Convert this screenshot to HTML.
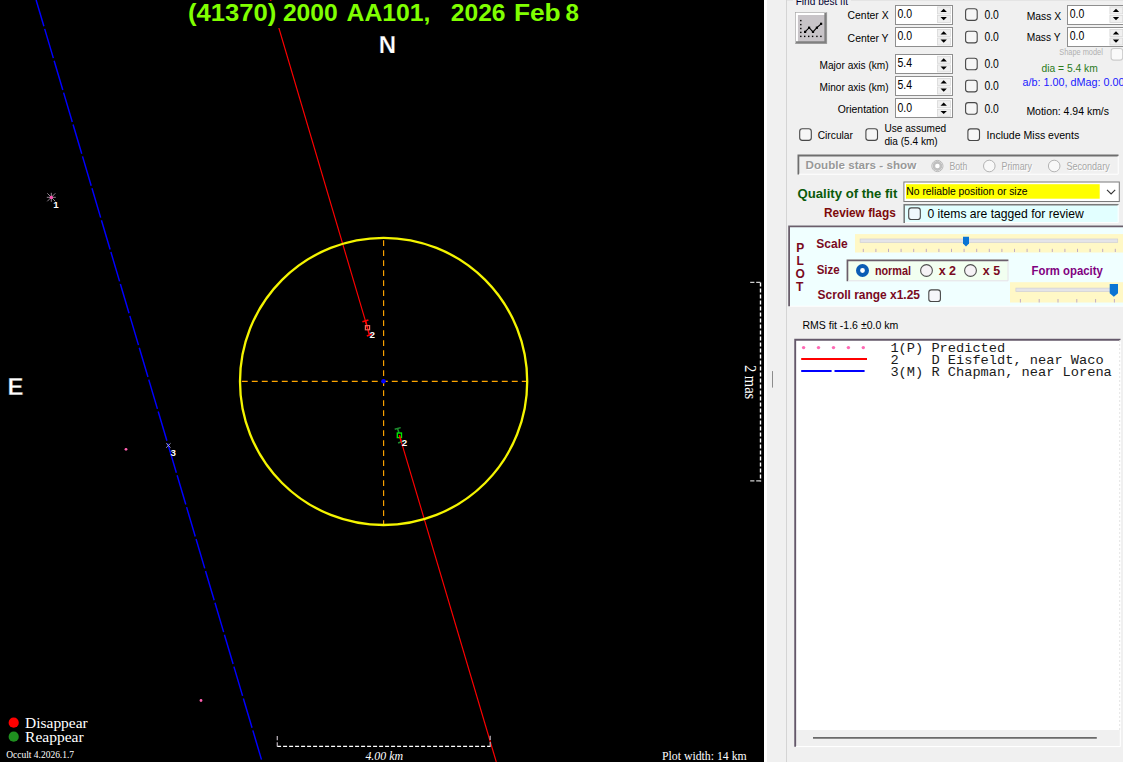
<!DOCTYPE html>
<html><head><meta charset="utf-8"><style>html,body{margin:0;padding:0;background:#f0f0f0;}body{width:1123px;height:762px;overflow:hidden;font-family:"Liberation Sans",sans-serif;}svg{display:block;}text{white-space:pre;}</style></head><body>
<svg width="1123" height="762" viewBox="0 0 1123 762">
<rect x="0" y="0" width="1123" height="762" fill="#f0f0f0"/>
<rect x="0" y="0" width="764" height="762" fill="#000"/>
<g id="plot">
<line x1="36.1" y1="0" x2="262.2" y2="762" stroke="#0000ff" stroke-width="1.45" stroke-dasharray="30.56 2.7" stroke-dashoffset="3.15"/>
<line x1="270.6" y1="0" x2="367.5" y2="327.8" stroke="#ff0000" stroke-width="1.15"/>
<line x1="399.4" y1="435.3" x2="496.3" y2="762" stroke="#ff0000" stroke-width="1.15"/>
<line x1="241.8" y1="381.3" x2="528" y2="381.3" stroke="#ffa500" stroke-width="1.15" stroke-dasharray="5.9 4.1"/>
<line x1="383.6" y1="240.2" x2="383.6" y2="526" stroke="#ffa500" stroke-width="1.15" stroke-dasharray="5.9 4.1"/>
<circle cx="383.6" cy="381.4" r="143.6" fill="none" stroke="#f4f400" stroke-width="2.3"/>
<circle cx="383.5" cy="381.3" r="2.3" fill="#0000ff"/>
<g stroke="#ff0000" stroke-width="1.5" fill="none"><line x1="362.4" y1="321.8" x2="368.4" y2="320"/><line x1="366.8" y1="336" x2="372.3" y2="334.1"/><line x1="365.5" y1="320.7" x2="369.4" y2="334.9"/></g>
<rect x="365.4" y="325.6" width="4.2" height="4.2" fill="none" stroke="#e8685c" stroke-width="1.2"/>
<g stroke="#1f8f2f" stroke-width="1.5" fill="none"><line x1="394.7" y1="429.2" x2="400.7" y2="427.6"/><line x1="398.1" y1="443" x2="403.6" y2="441"/><line x1="397.5" y1="428.3" x2="399" y2="433"/></g>
<rect x="397.3" y="433" width="4.2" height="4.6" fill="none" stroke="#00ee00" stroke-width="1.3"/>
<line x1="399.4" y1="435.3" x2="401.5" y2="442.5" stroke="#ff0000" stroke-width="1.4"/>
<g stroke="#a9a9d0" stroke-width="0.9"><line x1="166.2" y1="443.3" x2="170.6" y2="447.7"/><line x1="170.6" y1="443.3" x2="166.2" y2="447.7"/></g>
<g stroke="#b8a8b8" stroke-width="0.8"><line x1="46.8" y1="197.3" x2="55.8" y2="197.3"/><line x1="51.3" y1="192.8" x2="51.3" y2="201.8"/><line x1="47.3" y1="193.3" x2="55.3" y2="201.3"/><line x1="55.3" y1="193.3" x2="47.3" y2="201.3"/></g>
<circle cx="51.3" cy="197.4" r="1.7" fill="#ff50b0"/><circle cx="126" cy="449.3" r="1.4" fill="#ff60b0"/><circle cx="201" cy="700.5" r="1.4" fill="#ff60b0"/>
<circle cx="13.7" cy="722.7" r="5.1" fill="#ff0000"/><circle cx="13.7" cy="736.7" r="5.1" fill="#1f8f1f"/>
<g stroke="#fff" stroke-width="1.4" fill="none" stroke-dasharray="4 2"><line x1="277.1" y1="746.4" x2="490.6" y2="746.4"/><line x1="760.5" y1="282.4" x2="760.5" y2="481.4"/></g>
<g stroke="#b0a8b0" stroke-width="1.3" fill="none" stroke-dasharray="4.2 2"><line x1="277.3" y1="736" x2="277.3" y2="746.4"/><line x1="490.2" y1="735.7" x2="490.2" y2="746.4"/></g>
<g stroke="#d0d0d0" stroke-width="1.2" fill="none" stroke-dasharray="4.2 1.8"><line x1="750.2" y1="282.4" x2="760.5" y2="282.4"/><line x1="750.2" y1="480.8" x2="760.5" y2="480.8"/></g>
<rect x="186" y="1" width="396" height="27" fill="#000"/>
<text x="187.9" y="21.2" font-family="Liberation Sans" font-size="24" font-weight="bold" font-style="normal" fill="#80ff00" textLength="88.4" lengthAdjust="spacingAndGlyphs" >(41370)</text>
<text x="282.9" y="21.2" font-family="Liberation Sans" font-size="24" font-weight="bold" font-style="normal" fill="#80ff00" textLength="54.9" lengthAdjust="spacingAndGlyphs" >2000</text>
<text x="346.5" y="21.2" font-family="Liberation Sans" font-size="24" font-weight="bold" font-style="normal" fill="#80ff00" textLength="84.0" lengthAdjust="spacingAndGlyphs" >AA101,</text>
<text x="450.8" y="21.2" font-family="Liberation Sans" font-size="24" font-weight="bold" font-style="normal" fill="#80ff00" textLength="54.7" lengthAdjust="spacingAndGlyphs" >2026</text>
<text x="513.9" y="21.2" font-family="Liberation Sans" font-size="24" font-weight="bold" font-style="normal" fill="#80ff00" textLength="46.8" lengthAdjust="spacingAndGlyphs" >Feb</text>
<text x="565.4" y="21.2" font-family="Liberation Sans" font-size="24" font-weight="bold" font-style="normal" fill="#80ff00" textLength="13.4" lengthAdjust="spacingAndGlyphs" >8</text>
<text x="378.7" y="52.9" font-family="Liberation Sans" font-size="24" font-weight="bold" font-style="normal" fill="#fff" stroke="#000" stroke-width="0.25">N</text>
<text x="7.5" y="395.0" font-family="Liberation Sans" font-size="24" font-weight="bold" font-style="normal" fill="#fff" stroke="#000" stroke-width="0.3">E</text>
<text x="53.2" y="207.8" font-family="Liberation Sans" font-size="9.8" font-weight="bold" font-style="normal" fill="#fff" >1</text>
<text x="369.5" y="337.9" font-family="Liberation Sans" font-size="9.8" font-weight="bold" font-style="normal" fill="#fff" >2</text>
<text x="401.8" y="446.1" font-family="Liberation Sans" font-size="9.8" font-weight="bold" font-style="normal" fill="#fff" >2</text>
<text x="170.5" y="456.1" font-family="Liberation Sans" font-size="9.8" font-weight="bold" font-style="normal" fill="#fff" >3</text>
<text x="25.1" y="727.5" font-family="Liberation Serif" font-size="14.2" font-weight="normal" font-style="normal" fill="#fff" textLength="62.6" lengthAdjust="spacingAndGlyphs" >Disappear</text>
<text x="25.1" y="741.6" font-family="Liberation Serif" font-size="14.2" font-weight="normal" font-style="normal" fill="#fff" textLength="58.6" lengthAdjust="spacingAndGlyphs" >Reappear</text>
<text x="6.2" y="757.6" font-family="Liberation Serif" font-size="10" font-weight="normal" font-style="normal" fill="#fff" textLength="67.9" lengthAdjust="spacingAndGlyphs" >Occult 4.2026.1.7</text>
<text x="365.4" y="759.6" font-family="Liberation Serif" font-size="12.5" font-weight="normal" font-style="italic" fill="#fff" textLength="37.6" lengthAdjust="spacingAndGlyphs" >4.00 km</text>
<text x="662.0" y="759.6" font-family="Liberation Serif" font-size="12.7" font-weight="normal" font-style="normal" fill="#fff" textLength="84.7" lengthAdjust="spacingAndGlyphs" >Plot width: 14 km</text>
<g transform="translate(744.6,365) rotate(90)">
<text x="0.0" y="0.0" font-family="Liberation Serif" font-size="16" font-weight="normal" font-style="normal" fill="#fff" textLength="34.2" lengthAdjust="spacingAndGlyphs" >2 mas</text>
</g>
</g>
<g id="panel">
<rect x="764" y="0" width="3" height="762" fill="#fff"/>
<line x1="786.5" y1="0" x2="786.5" y2="762" stroke="#d4d4d4" stroke-width="1"/>
<line x1="772.5" y1="371.1" x2="772.5" y2="387.6" stroke="#8c8c8c" stroke-width="1"/>
<line x1="787" y1="0.5" x2="1123" y2="0.5" stroke="#e4e4e4" stroke-width="1"/>
<rect x="793" y="0" width="58" height="6" fill="#f0f0f0"/>
<text x="795.7" y="4.6" font-family="Liberation Sans" font-size="11.5" font-weight="normal" font-style="normal" fill="#000030" textLength="52.3" lengthAdjust="spacingAndGlyphs" >Find best fit</text>
<rect x="795.3" y="12.3" width="31.5" height="31.4" fill="#c8c4c8"/>
<path d="M796.6 43.7V13.6H826.8" fill="none" stroke="#fff" stroke-width="2.6"/>
<path d="M825.6 13V42.4H796" fill="none" stroke="#808080" stroke-width="2.5"/>
<rect x="795.3" y="12.3" width="31.5" height="31.4" fill="none" stroke="#a0a0a0" stroke-width="0.6"/>
<rect x="800.1" y="19.9" width="1.4" height="1.4" fill="#000"/>
<rect x="800.1" y="23.9" width="1.4" height="1.4" fill="#000"/>
<rect x="800.1" y="27.8" width="1.4" height="1.4" fill="#000"/>
<rect x="800.1" y="31.7" width="1.4" height="1.4" fill="#000"/>
<rect x="800.1" y="35.7" width="1.4" height="1.4" fill="#000"/>
<rect x="804.0" y="35.7" width="1.4" height="1.4" fill="#000"/>
<rect x="808.0" y="35.7" width="1.4" height="1.4" fill="#000"/>
<rect x="811.9" y="35.7" width="1.4" height="1.4" fill="#000"/>
<rect x="816.2" y="35.7" width="1.4" height="1.4" fill="#000"/>
<rect x="820.2" y="35.7" width="1.4" height="1.4" fill="#000"/>
<polyline points="805.1,31.9 809.1,27.7 813,31.9 816.9,27.7 821.1,23.8" fill="none" stroke="#000" stroke-width="1.1"/>
<rect x="804.0" y="30.8" width="2.2" height="2.2" fill="#000"/>
<rect x="808.0" y="26.6" width="2.2" height="2.2" fill="#000"/>
<rect x="811.9" y="30.8" width="2.2" height="2.2" fill="#000"/>
<rect x="815.8" y="26.6" width="2.2" height="2.2" fill="#000"/>
<rect x="820.0" y="22.7" width="2.2" height="2.2" fill="#000"/>
<text x="847.6" y="19.3" font-family="Liberation Sans" font-size="11.7" font-weight="normal" font-style="normal" fill="#000" textLength="41.0" lengthAdjust="spacingAndGlyphs" >Center X</text>
<rect x="895.5" y="5.5" width="57.0" height="19" fill="#fff" stroke="#8e8e8e" stroke-width="1"/>
<text x="897.4" y="17.7" font-family="Liberation Sans" font-size="12.3" font-weight="normal" font-style="normal" fill="#000" textLength="14.6" lengthAdjust="spacingAndGlyphs" >0.0</text>
<rect x="937.6" y="6.9" width="12.8" height="7" fill="#f0f0f0" stroke="#d8d8d8" stroke-width="0.8"/>
<rect x="937.6" y="15.5" width="12.8" height="7" fill="#f0f0f0" stroke="#d8d8d8" stroke-width="0.8"/>
<path d="M940.5 12.0L943.7 8.8L946.9 12.0Z" fill="#000"/>
<path d="M940.5 17.1L943.7 20.3L946.9 17.1Z" fill="#000"/>
<rect x="965.6" y="8.8" width="11.6" height="11.6" rx="2.6" fill="#f6f6f6" stroke="#484848" stroke-width="1.1"/>
<text x="984.4" y="18.9" font-family="Liberation Sans" font-size="12" font-weight="normal" font-style="normal" fill="#000" textLength="14.4" lengthAdjust="spacingAndGlyphs" >0.0</text>
<text x="847.6" y="41.8" font-family="Liberation Sans" font-size="11.7" font-weight="normal" font-style="normal" fill="#000" textLength="41.0" lengthAdjust="spacingAndGlyphs" >Center Y</text>
<rect x="895.5" y="27.5" width="57.0" height="19" fill="#fff" stroke="#8e8e8e" stroke-width="1"/>
<text x="897.4" y="40.2" font-family="Liberation Sans" font-size="12.3" font-weight="normal" font-style="normal" fill="#000" textLength="14.6" lengthAdjust="spacingAndGlyphs" >0.0</text>
<rect x="937.6" y="29.4" width="12.8" height="7" fill="#f0f0f0" stroke="#d8d8d8" stroke-width="0.8"/>
<rect x="937.6" y="38.0" width="12.8" height="7" fill="#f0f0f0" stroke="#d8d8d8" stroke-width="0.8"/>
<path d="M940.5 34.5L943.7 31.3L946.9 34.5Z" fill="#000"/>
<path d="M940.5 39.6L943.7 42.8L946.9 39.6Z" fill="#000"/>
<rect x="965.6" y="31.3" width="11.6" height="11.6" rx="2.6" fill="#f6f6f6" stroke="#484848" stroke-width="1.1"/>
<text x="984.4" y="41.4" font-family="Liberation Sans" font-size="12" font-weight="normal" font-style="normal" fill="#000" textLength="14.4" lengthAdjust="spacingAndGlyphs" >0.0</text>
<text x="819.6" y="68.7" font-family="Liberation Sans" font-size="11.7" font-weight="normal" font-style="normal" fill="#000" textLength="69.0" lengthAdjust="spacingAndGlyphs" >Major axis (km)</text>
<rect x="895.5" y="54.5" width="57.0" height="19" fill="#fff" stroke="#8e8e8e" stroke-width="1"/>
<text x="897.4" y="67.1" font-family="Liberation Sans" font-size="12.3" font-weight="normal" font-style="normal" fill="#000" textLength="14.6" lengthAdjust="spacingAndGlyphs" >5.4</text>
<rect x="937.6" y="56.3" width="12.8" height="7" fill="#f0f0f0" stroke="#d8d8d8" stroke-width="0.8"/>
<rect x="937.6" y="64.9" width="12.8" height="7" fill="#f0f0f0" stroke="#d8d8d8" stroke-width="0.8"/>
<path d="M940.5 61.4L943.7 58.2L946.9 61.4Z" fill="#000"/>
<path d="M940.5 66.5L943.7 69.7L946.9 66.5Z" fill="#000"/>
<rect x="965.6" y="58.2" width="11.6" height="11.6" rx="2.6" fill="#f6f6f6" stroke="#484848" stroke-width="1.1"/>
<text x="984.4" y="68.3" font-family="Liberation Sans" font-size="12" font-weight="normal" font-style="normal" fill="#000" textLength="14.4" lengthAdjust="spacingAndGlyphs" >0.0</text>
<text x="819.6" y="90.8" font-family="Liberation Sans" font-size="11.7" font-weight="normal" font-style="normal" fill="#000" textLength="69.0" lengthAdjust="spacingAndGlyphs" >Minor axis (km)</text>
<rect x="895.5" y="76.5" width="57.0" height="19" fill="#fff" stroke="#8e8e8e" stroke-width="1"/>
<text x="897.4" y="89.2" font-family="Liberation Sans" font-size="12.3" font-weight="normal" font-style="normal" fill="#000" textLength="14.6" lengthAdjust="spacingAndGlyphs" >5.4</text>
<rect x="937.6" y="78.4" width="12.8" height="7" fill="#f0f0f0" stroke="#d8d8d8" stroke-width="0.8"/>
<rect x="937.6" y="87.0" width="12.8" height="7" fill="#f0f0f0" stroke="#d8d8d8" stroke-width="0.8"/>
<path d="M940.5 83.5L943.7 80.3L946.9 83.5Z" fill="#000"/>
<path d="M940.5 88.6L943.7 91.8L946.9 88.6Z" fill="#000"/>
<rect x="965.6" y="80.3" width="11.6" height="11.6" rx="2.6" fill="#f6f6f6" stroke="#484848" stroke-width="1.1"/>
<text x="984.4" y="90.4" font-family="Liberation Sans" font-size="12" font-weight="normal" font-style="normal" fill="#000" textLength="14.4" lengthAdjust="spacingAndGlyphs" >0.0</text>
<text x="837.7" y="113.1" font-family="Liberation Sans" font-size="11.7" font-weight="normal" font-style="normal" fill="#000" textLength="50.9" lengthAdjust="spacingAndGlyphs" >Orientation</text>
<rect x="895.5" y="98.5" width="57.0" height="19" fill="#fff" stroke="#8e8e8e" stroke-width="1"/>
<text x="897.4" y="111.5" font-family="Liberation Sans" font-size="12.3" font-weight="normal" font-style="normal" fill="#000" textLength="14.6" lengthAdjust="spacingAndGlyphs" >0.0</text>
<rect x="937.6" y="100.7" width="12.8" height="7" fill="#f0f0f0" stroke="#d8d8d8" stroke-width="0.8"/>
<rect x="937.6" y="109.3" width="12.8" height="7" fill="#f0f0f0" stroke="#d8d8d8" stroke-width="0.8"/>
<path d="M940.5 105.8L943.7 102.6L946.9 105.8Z" fill="#000"/>
<path d="M940.5 110.9L943.7 114.1L946.9 110.9Z" fill="#000"/>
<rect x="965.6" y="102.6" width="11.6" height="11.6" rx="2.6" fill="#f6f6f6" stroke="#484848" stroke-width="1.1"/>
<text x="984.4" y="112.7" font-family="Liberation Sans" font-size="12" font-weight="normal" font-style="normal" fill="#000" textLength="14.4" lengthAdjust="spacingAndGlyphs" >0.0</text>
<text x="1026.7" y="19.8" font-family="Liberation Sans" font-size="11.5" font-weight="normal" font-style="normal" fill="#000" textLength="34.5" lengthAdjust="spacingAndGlyphs" >Mass X</text>
<text x="1026.7" y="41.2" font-family="Liberation Sans" font-size="11.5" font-weight="normal" font-style="normal" fill="#000" textLength="33.8" lengthAdjust="spacingAndGlyphs" >Mass Y</text>
<rect x="1067.5" y="5.5" width="57.0" height="19" fill="#fff" stroke="#8e8e8e" stroke-width="1"/>
<text x="1069.7" y="17.7" font-family="Liberation Sans" font-size="12.3" font-weight="normal" font-style="normal" fill="#000" textLength="14.6" lengthAdjust="spacingAndGlyphs" >0.0</text>
<rect x="1109.9" y="6.9" width="12.8" height="7" fill="#f0f0f0" stroke="#d8d8d8" stroke-width="0.8"/>
<rect x="1109.9" y="15.5" width="12.8" height="7" fill="#f0f0f0" stroke="#d8d8d8" stroke-width="0.8"/>
<path d="M1112.8 12.0L1116.0 8.8L1119.2 12.0Z" fill="#000"/>
<path d="M1112.8 17.1L1116.0 20.3L1119.2 17.1Z" fill="#000"/>
<rect x="1067.5" y="27.5" width="57.0" height="19" fill="#fff" stroke="#8e8e8e" stroke-width="1"/>
<text x="1069.7" y="40.2" font-family="Liberation Sans" font-size="12.3" font-weight="normal" font-style="normal" fill="#000" textLength="14.6" lengthAdjust="spacingAndGlyphs" >0.0</text>
<rect x="1109.9" y="29.4" width="12.8" height="7" fill="#f0f0f0" stroke="#d8d8d8" stroke-width="0.8"/>
<rect x="1109.9" y="38.0" width="12.8" height="7" fill="#f0f0f0" stroke="#d8d8d8" stroke-width="0.8"/>
<path d="M1112.8 34.5L1116.0 31.3L1119.2 34.5Z" fill="#000"/>
<path d="M1112.8 39.6L1116.0 42.8L1119.2 39.6Z" fill="#000"/>
<text x="1059.3" y="54.5" font-family="Liberation Sans" font-size="9" font-weight="normal" font-style="normal" fill="#b0b0b0" textLength="43.5" lengthAdjust="spacingAndGlyphs" >Shape model</text>
<rect x="1111.1" y="48.5" width="11.6" height="11.6" rx="2.6" fill="#fafafa" stroke="#cccccc" stroke-width="1.1"/>
<text x="1041.5" y="71.5" font-family="Liberation Sans" font-size="10.5" font-weight="normal" font-style="normal" fill="#2a7a1a" textLength="56.3" lengthAdjust="spacingAndGlyphs" >dia = 5.4 km</text>
<text x="1022.5" y="85.6" font-family="Liberation Sans" font-size="10.5" font-weight="normal" font-style="normal" fill="#1a1aff" textLength="102.0" lengthAdjust="spacingAndGlyphs" >a/b: 1.00, dMag: 0.00</text>
<text x="1026.4" y="115.4" font-family="Liberation Sans" font-size="10.6" font-weight="normal" font-style="normal" fill="#000" textLength="82.6" lengthAdjust="spacingAndGlyphs" >Motion: 4.94 km/s</text>
<rect x="799.7" y="128.8" width="11.6" height="11.6" rx="2.6" fill="#f6f6f6" stroke="#484848" stroke-width="1.1"/>
<text x="817.7" y="139.2" font-family="Liberation Sans" font-size="11.5" font-weight="normal" font-style="normal" fill="#000" textLength="35.3" lengthAdjust="spacingAndGlyphs" >Circular</text>
<rect x="865.9" y="128.8" width="11.6" height="11.6" rx="2.6" fill="#f6f6f6" stroke="#484848" stroke-width="1.1"/>
<text x="884.5" y="132.3" font-family="Liberation Sans" font-size="10.8" font-weight="normal" font-style="normal" fill="#000" textLength="61.7" lengthAdjust="spacingAndGlyphs" >Use assumed</text>
<text x="884.5" y="145.2" font-family="Liberation Sans" font-size="10.8" font-weight="normal" font-style="normal" fill="#000" textLength="53.2" lengthAdjust="spacingAndGlyphs" >dia (5.4 km)</text>
<rect x="967.9" y="128.9" width="11.6" height="11.6" rx="2.6" fill="#f6f6f6" stroke="#484848" stroke-width="1.1"/>
<text x="986.6" y="139.2" font-family="Liberation Sans" font-size="11.5" font-weight="normal" font-style="normal" fill="#000" textLength="92.6" lengthAdjust="spacingAndGlyphs" >Include Miss events</text>
<path d="M798.4 174.5V155.5H1118.5" fill="none" stroke="#6e6e6e" stroke-width="1.8"/>
<path d="M1118.2 156V174.2H799" fill="none" stroke="#fff" stroke-width="1"/>
<text x="806.6" y="169.9" font-family="Liberation Sans" font-size="11.5" font-weight="bold" font-style="normal" fill="#fff" textLength="110.6" lengthAdjust="spacingAndGlyphs" >Double stars - show</text>
<text x="805.6" y="169.1" font-family="Liberation Sans" font-size="11.5" font-weight="bold" font-style="normal" fill="#989898" textLength="110.6" lengthAdjust="spacingAndGlyphs" >Double stars - show</text>
<circle cx="937.4" cy="166" r="5.6" fill="#fff" stroke="#b8b8b8" stroke-width="1"/><circle cx="937.4" cy="166" r="3.6" fill="none" stroke="#c0c0c0" stroke-width="2.6"/>
<circle cx="989.3" cy="166" r="5.8" fill="#f8f8f8" stroke="#b4b4b4" stroke-width="1"/>
<circle cx="1054.2" cy="166" r="5.8" fill="#f8f8f8" stroke="#b4b4b4" stroke-width="1"/>
<text x="950.2" y="170.8" font-family="Liberation Sans" font-size="10.5" font-weight="normal" font-style="normal" fill="#fff" textLength="18.0" lengthAdjust="spacingAndGlyphs" >Both</text>
<text x="949.4" y="170.0" font-family="Liberation Sans" font-size="10.5" font-weight="normal" font-style="normal" fill="#a6a6a6" textLength="18.0" lengthAdjust="spacingAndGlyphs" >Both</text>
<text x="1002.3" y="170.8" font-family="Liberation Sans" font-size="10.5" font-weight="normal" font-style="normal" fill="#fff" textLength="30.5" lengthAdjust="spacingAndGlyphs" >Primary</text>
<text x="1001.5" y="170.0" font-family="Liberation Sans" font-size="10.5" font-weight="normal" font-style="normal" fill="#a6a6a6" textLength="30.5" lengthAdjust="spacingAndGlyphs" >Primary</text>
<text x="1067.2" y="170.8" font-family="Liberation Sans" font-size="10.5" font-weight="normal" font-style="normal" fill="#fff" textLength="43.3" lengthAdjust="spacingAndGlyphs" >Secondary</text>
<text x="1066.4" y="170.0" font-family="Liberation Sans" font-size="10.5" font-weight="normal" font-style="normal" fill="#a6a6a6" textLength="43.3" lengthAdjust="spacingAndGlyphs" >Secondary</text>
<text x="797.5" y="197.8" font-family="Liberation Sans" font-size="12" font-weight="bold" font-style="normal" fill="#0a5a0a" textLength="99.9" lengthAdjust="spacingAndGlyphs" >Quality of the fit</text>
<rect x="903.9" y="182" width="215.4" height="19.5" fill="#fff" stroke="#7a7a7a" stroke-width="1"/>
<rect x="906" y="184.2" width="193.7" height="14.5" fill="#ffff00"/>
<text x="906.3" y="195.3" font-family="Liberation Sans" font-size="11.5" font-weight="normal" font-style="normal" fill="#000" textLength="121.3" lengthAdjust="spacingAndGlyphs" >No reliable position or size</text>
<polyline points="1107,189.8 1111.1,194 1115.2,189.8" fill="none" stroke="#333" stroke-width="1.1"/>
<text x="824.0" y="217.4" font-family="Liberation Sans" font-size="12" font-weight="bold" font-style="normal" fill="#7d0a0a" textLength="71.8" lengthAdjust="spacingAndGlyphs" >Review flags</text>
<rect x="903.4" y="204" width="215.1" height="19" fill="#e2ffff"/>
<path d="M904.2 223V204.8H1118.5" fill="none" stroke="#7a7a7a" stroke-width="1.6"/>
<path d="M1118.2 205V222.6H905" fill="none" stroke="#fff" stroke-width="1"/>
<rect x="908.7" y="207.9" width="11.6" height="11.6" rx="2.6" fill="#f0f8fc" stroke="#484848" stroke-width="1.1"/>
<text x="927.4" y="218.2" font-family="Liberation Sans" font-size="13" font-weight="normal" font-style="normal" fill="#000" textLength="156.3" lengthAdjust="spacingAndGlyphs" >0 items are tagged for review</text>
<rect x="788.2" y="225.5" width="340" height="80.7" fill="#f0ffff"/>
<path d="M789.1 306.2V226.4H1123" fill="none" stroke="#6b5e6b" stroke-width="1.8"/>
<line x1="790" y1="306.2" x2="1123" y2="306.2" stroke="#fff" stroke-width="1"/>
<text x="796.2" y="251.7" font-family="Liberation Sans" font-size="12" font-weight="bold" font-style="normal" fill="#7a0a1e" >P</text>
<text x="796.5" y="264.8" font-family="Liberation Sans" font-size="12" font-weight="bold" font-style="normal" fill="#7a0a1e" >L</text>
<text x="795.4" y="277.7" font-family="Liberation Sans" font-size="12" font-weight="bold" font-style="normal" fill="#7a0a1e" >O</text>
<text x="796.0" y="290.6" font-family="Liberation Sans" font-size="12" font-weight="bold" font-style="normal" fill="#7a0a1e" >T</text>
<text x="816.3" y="247.8" font-family="Liberation Sans" font-size="12" font-weight="bold" font-style="normal" fill="#7a0a1e" textLength="31.4" lengthAdjust="spacingAndGlyphs" >Scale</text>
<text x="816.7" y="273.9" font-family="Liberation Sans" font-size="12" font-weight="bold" font-style="normal" fill="#7a0a1e" textLength="23.0" lengthAdjust="spacingAndGlyphs" >Size</text>
<text x="817.6" y="299.3" font-family="Liberation Sans" font-size="12" font-weight="bold" font-style="normal" fill="#7a0a1e" textLength="102.4" lengthAdjust="spacingAndGlyphs" >Scroll range x1.25</text>
<rect x="928.8" y="289.9" width="11.6" height="11.6" rx="2.6" fill="#f6f6fa" stroke="#484848" stroke-width="1.1"/>
<rect x="855" y="234.1" width="270" height="18.4" fill="#fff8c6"/>
<rect x="860.1" y="239" width="257.6" height="3.4" fill="#e4e4e8" stroke="#cfcfd6" stroke-width="0.7"/>
<line x1="863.3" y1="248.8" x2="863.3" y2="252" stroke="#b8a4c4" stroke-width="0.9"/>
<line x1="875.9" y1="248.8" x2="875.9" y2="252" stroke="#b8a4c4" stroke-width="0.9"/>
<line x1="888.5" y1="248.8" x2="888.5" y2="252" stroke="#b8a4c4" stroke-width="0.9"/>
<line x1="901.1" y1="248.8" x2="901.1" y2="252" stroke="#b8a4c4" stroke-width="0.9"/>
<line x1="913.7" y1="248.8" x2="913.7" y2="252" stroke="#b8a4c4" stroke-width="0.9"/>
<line x1="926.3" y1="248.8" x2="926.3" y2="252" stroke="#b8a4c4" stroke-width="0.9"/>
<line x1="938.9" y1="248.8" x2="938.9" y2="252" stroke="#b8a4c4" stroke-width="0.9"/>
<line x1="951.5" y1="248.8" x2="951.5" y2="252" stroke="#b8a4c4" stroke-width="0.9"/>
<line x1="964.1" y1="248.8" x2="964.1" y2="252" stroke="#b8a4c4" stroke-width="0.9"/>
<line x1="976.7" y1="248.8" x2="976.7" y2="252" stroke="#b8a4c4" stroke-width="0.9"/>
<line x1="989.3" y1="248.8" x2="989.3" y2="252" stroke="#b8a4c4" stroke-width="0.9"/>
<line x1="1001.9" y1="248.8" x2="1001.9" y2="252" stroke="#b8a4c4" stroke-width="0.9"/>
<line x1="1014.5" y1="248.8" x2="1014.5" y2="252" stroke="#b8a4c4" stroke-width="0.9"/>
<line x1="1027.1" y1="248.8" x2="1027.1" y2="252" stroke="#b8a4c4" stroke-width="0.9"/>
<line x1="1039.7" y1="248.8" x2="1039.7" y2="252" stroke="#b8a4c4" stroke-width="0.9"/>
<line x1="1052.3" y1="248.8" x2="1052.3" y2="252" stroke="#b8a4c4" stroke-width="0.9"/>
<line x1="1064.9" y1="248.8" x2="1064.9" y2="252" stroke="#b8a4c4" stroke-width="0.9"/>
<line x1="1077.5" y1="248.8" x2="1077.5" y2="252" stroke="#b8a4c4" stroke-width="0.9"/>
<line x1="1090.1" y1="248.8" x2="1090.1" y2="252" stroke="#b8a4c4" stroke-width="0.9"/>
<line x1="1102.7" y1="248.8" x2="1102.7" y2="252" stroke="#b8a4c4" stroke-width="0.9"/>
<line x1="1115.3" y1="248.8" x2="1115.3" y2="252" stroke="#b8a4c4" stroke-width="0.9"/>
<path d="M963 236.8H969V243.6L966 246.4L963 243.6Z" fill="#0a74d4"/>
<rect x="846.5" y="259.3" width="161.9" height="21.9" fill="#f2fff0"/>
<path d="M847.45 281.2V260.35H1008.4" fill="none" stroke="#6b5e6b" stroke-width="1.7"/>
<path d="M1008 261V280.8H848" fill="none" stroke="#e6e2ea" stroke-width="1"/>
<circle cx="862.5" cy="270.5" r="4.45" fill="#fff" stroke="#0a5cb4" stroke-width="4.1"/>
<text x="874.9" y="274.8" font-family="Liberation Sans" font-size="12" font-weight="bold" font-style="normal" fill="#7a0a1e" textLength="36.1" lengthAdjust="spacingAndGlyphs" >normal</text>
<circle cx="926.5" cy="270.5" r="5.9" fill="#f6f2f6" stroke="#505050" stroke-width="1.1"/>
<text x="938.7" y="274.8" font-family="Liberation Sans" font-size="12" font-weight="bold" font-style="normal" fill="#7a0a1e" textLength="17.4" lengthAdjust="spacingAndGlyphs" >x 2</text>
<circle cx="970.5" cy="270.5" r="5.9" fill="#f6f2f6" stroke="#505050" stroke-width="1.1"/>
<text x="982.8" y="274.8" font-family="Liberation Sans" font-size="12" font-weight="bold" font-style="normal" fill="#7a0a1e" textLength="17.3" lengthAdjust="spacingAndGlyphs" >x 5</text>
<text x="1031.6" y="275.0" font-family="Liberation Sans" font-size="12" font-weight="bold" font-style="normal" fill="#800080" textLength="71.2" lengthAdjust="spacingAndGlyphs" >Form opacity</text>
<rect x="1010" y="282.2" width="115" height="20.3" fill="#fff8c6"/>
<rect x="1015.9" y="288.1" width="101.8" height="3.4" fill="#e4e4e8" stroke="#cfcfd6" stroke-width="0.7"/>
<line x1="1020.4" y1="299" x2="1020.4" y2="302.5" stroke="#b8a4c4" stroke-width="0.9"/>
<line x1="1039.2" y1="299" x2="1039.2" y2="302.5" stroke="#b8a4c4" stroke-width="0.9"/>
<line x1="1058.0" y1="299" x2="1058.0" y2="302.5" stroke="#b8a4c4" stroke-width="0.9"/>
<line x1="1076.8" y1="299" x2="1076.8" y2="302.5" stroke="#b8a4c4" stroke-width="0.9"/>
<line x1="1095.6" y1="299" x2="1095.6" y2="302.5" stroke="#b8a4c4" stroke-width="0.9"/>
<line x1="1114.4" y1="299" x2="1114.4" y2="302.5" stroke="#b8a4c4" stroke-width="0.9"/>
<path d="M1109.7 284.1H1118V293.2L1113.85 296.8L1109.7 293.2Z" fill="#0a74d4"/>
<text x="802.4" y="328.7" font-family="Liberation Sans" font-size="11.8" font-weight="normal" font-style="normal" fill="#000" textLength="95.9" lengthAdjust="spacingAndGlyphs" >RMS fit -1.6 ±0.0 km</text>
<rect x="794.2" y="338.8" width="326.3" height="408" fill="#fff"/>
<rect x="796" y="730" width="324.5" height="16.5" fill="#f0f0f0"/>
<path d="M795.2 746.8V339.7H1120.5" fill="none" stroke="#64586a" stroke-width="1.9"/>
<path d="M1120.3 340V746.6H796" fill="none" stroke="#fff" stroke-width="1"/>
<line x1="1119.7" y1="340" x2="1119.7" y2="730" stroke="#dcdcdc" stroke-width="0.8" stroke-dasharray="2 2"/>
<line x1="813" y1="737.9" x2="1096.8" y2="737.9" stroke="#6a6a6a" stroke-width="1.8"/>
<circle cx="803.6" cy="347.6" r="1.7" fill="#ff69b4"/>
<circle cx="818.5" cy="347.6" r="1.7" fill="#ff69b4"/>
<circle cx="833.5" cy="347.6" r="1.7" fill="#ff69b4"/>
<circle cx="848.4" cy="347.6" r="1.7" fill="#ff69b4"/>
<circle cx="863.3" cy="347.6" r="1.7" fill="#ff69b4"/>
<line x1="801.2" y1="359" x2="867" y2="359" stroke="#ff0000" stroke-width="2"/>
<line x1="801.2" y1="371" x2="831.6" y2="371" stroke="#0000ff" stroke-width="2"/>
<line x1="834.5" y1="371" x2="864.6" y2="371" stroke="#0000ff" stroke-width="2"/>
<text x="890.4" y="351.9" font-family="Liberation Mono" font-size="11.9" font-weight="normal" font-style="normal" fill="#1a1a1a" textLength="114.8" lengthAdjust="spacingAndGlyphs" >1(P) Predicted</text>
<text x="890.4" y="363.8" font-family="Liberation Mono" font-size="11.9" font-weight="normal" font-style="normal" fill="#1a1a1a" textLength="213.2" lengthAdjust="spacingAndGlyphs" >2    D Eisfeldt, near Waco</text>
<text x="890.4" y="375.7" font-family="Liberation Mono" font-size="11.9" font-weight="normal" font-style="normal" fill="#1a1a1a" textLength="221.4" lengthAdjust="spacingAndGlyphs" >3(M) R Chapman, near Lorena</text>
</g>
</svg></body></html>
